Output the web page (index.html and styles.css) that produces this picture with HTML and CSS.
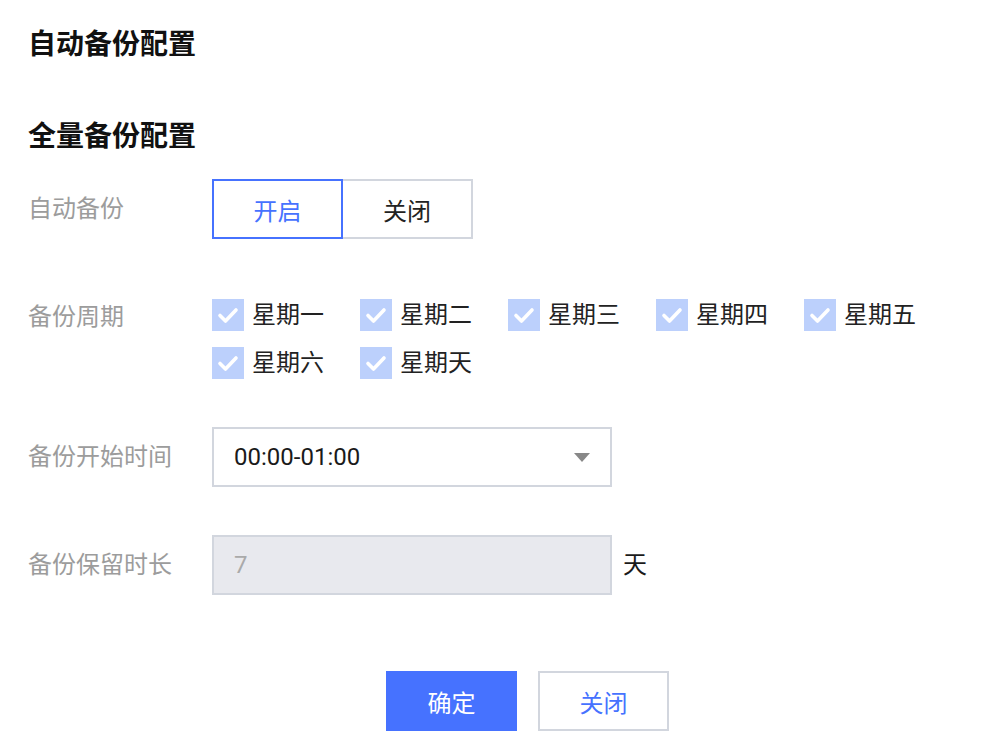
FILE: index.html
```html
<!DOCTYPE html>
<html lang="zh-CN">
<head>
<meta charset="utf-8">
<title>自动备份配置</title>
<link rel="stylesheet" href="styles.css">
</head>
<body>
<div class="page">
  <h1 class="title">自动备份配置</h1>
  <h2 class="subtitle">全量备份配置</h2>

  <div class="row row-switch">
    <div class="label">自动备份</div>
    <div class="segmented">
      <button class="seg seg-active">开启</button>
      <button class="seg">关闭</button>
    </div>
  </div>

  <div class="row row-days">
    <div class="label label-days">备份周期</div>
    <div class="days">
      <label class="day"><span class="box"><svg viewBox="0 0 32 32" width="32" height="32"><path d="M8 16.5 L13.5 22 L24 11" fill="none" stroke="#fff" stroke-width="3.6" stroke-linecap="round" stroke-linejoin="round"/></svg></span>星期一</label>
      <label class="day"><span class="box"><svg viewBox="0 0 32 32" width="32" height="32"><path d="M8 16.5 L13.5 22 L24 11" fill="none" stroke="#fff" stroke-width="3.6" stroke-linecap="round" stroke-linejoin="round"/></svg></span>星期二</label>
      <label class="day"><span class="box"><svg viewBox="0 0 32 32" width="32" height="32"><path d="M8 16.5 L13.5 22 L24 11" fill="none" stroke="#fff" stroke-width="3.6" stroke-linecap="round" stroke-linejoin="round"/></svg></span>星期三</label>
      <label class="day"><span class="box"><svg viewBox="0 0 32 32" width="32" height="32"><path d="M8 16.5 L13.5 22 L24 11" fill="none" stroke="#fff" stroke-width="3.6" stroke-linecap="round" stroke-linejoin="round"/></svg></span>星期四</label>
      <label class="day"><span class="box"><svg viewBox="0 0 32 32" width="32" height="32"><path d="M8 16.5 L13.5 22 L24 11" fill="none" stroke="#fff" stroke-width="3.6" stroke-linecap="round" stroke-linejoin="round"/></svg></span>星期五</label>
      <label class="day"><span class="box"><svg viewBox="0 0 32 32" width="32" height="32"><path d="M8 16.5 L13.5 22 L24 11" fill="none" stroke="#fff" stroke-width="3.6" stroke-linecap="round" stroke-linejoin="round"/></svg></span>星期六</label>
      <label class="day"><span class="box"><svg viewBox="0 0 32 32" width="32" height="32"><path d="M8 16.5 L13.5 22 L24 11" fill="none" stroke="#fff" stroke-width="3.6" stroke-linecap="round" stroke-linejoin="round"/></svg></span>星期天</label>
    </div>
  </div>

  <div class="row row-select">
    <div class="label">备份开始时间</div>
    <div class="select">
      <span class="select-value">00:00-01:00</span>
      <span class="caret"></span>
    </div>
  </div>

  <div class="row row-keep">
    <div class="label">备份保留时长</div>
    <div class="input-disabled">7</div>
    <span class="unit">天</span>
  </div>

  <div class="footer">
    <button class="btn btn-primary">确定</button>
    <button class="btn btn-default">关闭</button>
  </div>
</div>
</body>
</html>
```

FILE: styles.css
```css
* { box-sizing: border-box; }
html, body { margin: 0; padding: 0; background: #fff; }
body {
  font-family: Roboto, "Noto Sans CJK SC", sans-serif;
  color: #222;
  font-size: 24px;
}
.page {
  padding: 25px 0 0 28px;
}
.title {
  margin: 0;
  font-size: 28px;
  line-height: 40px;
  font-weight: 700;
  color: #111;
}
.subtitle {
  margin: 52px 0 0 0;
  font-size: 28px;
  line-height: 40px;
  font-weight: 700;
  color: #111;
}
.row {
  display: flex;
  align-items: flex-start;
}
.row-switch { margin-top: 22px; }
.row-days { margin-top: 52px; }
.row-select { margin-top: 40px; }
.row-keep { margin-top: 48px; align-items: center; }
.label {
  width: 184px;
  flex: none;
  color: #9c9c9c;
  line-height: 60px;
  font-size: 24px;
}
.label-days { line-height: 52px; }

.segmented { display: flex; }
.seg {
  width: 131px;
  height: 60px;
  font: inherit;
  font-size: 24px;
  background: #fff;
  color: #222;
  border: 2px solid #d2d6de;
  padding: 0;
  margin: 0;
}
.seg + .seg { border-left: none; width: 130px; }
.seg-active {
  border-color: #4672ff;
  color: #4672ff;
}

.days {
  display: flex;
  flex-wrap: wrap;
  column-gap: 36px;
  width: 760px;
}
.day {
  display: flex;
  align-items: center;
  gap: 8px;
  height: 48px;
  line-height: 48px;
  color: #222;
  font-size: 24px;
}
.box {
  width: 32px;
  height: 32px;
  background: #bcd0fc;
  display: block;
  flex: none;
}
.box svg { display: block; }

.select {
  width: 400px;
  height: 60px;
  border: 2px solid #d2d6de;
  display: flex;
  align-items: center;
  justify-content: space-between;
  padding: 0 20px;
}
.select-value { color: #1a1a1a; font-size: 24px; }
.caret {
  width: 0;
  height: 0;
  border-left: 8px solid transparent;
  border-right: 8px solid transparent;
  border-top: 9px solid #888;
  margin-right: 0;
}
.input-disabled {
  width: 400px;
  height: 60px;
  border: 2px solid #d2d6de;
  background: #e8e9ee;
  color: #aaa;
  line-height: 56px;
  padding: 0 20px;
  font-size: 24px;
}
.unit {
  margin-left: 11px;
  color: #1a1a1a;
  line-height: 56px;
}

.footer {
  margin-top: 76px;
  padding-left: 358px;
  display: flex;
  gap: 21px;
}
.btn {
  width: 131px;
  height: 60px;
  font: inherit;
  font-size: 24px;
  padding: 0;
  margin: 0;
}
.btn-primary {
  background: #4672ff;
  color: #fff;
  border: none;
}
.btn-default {
  background: #fff;
  color: #4672ff;
  border: 2px solid #d2d6de;
}
```
